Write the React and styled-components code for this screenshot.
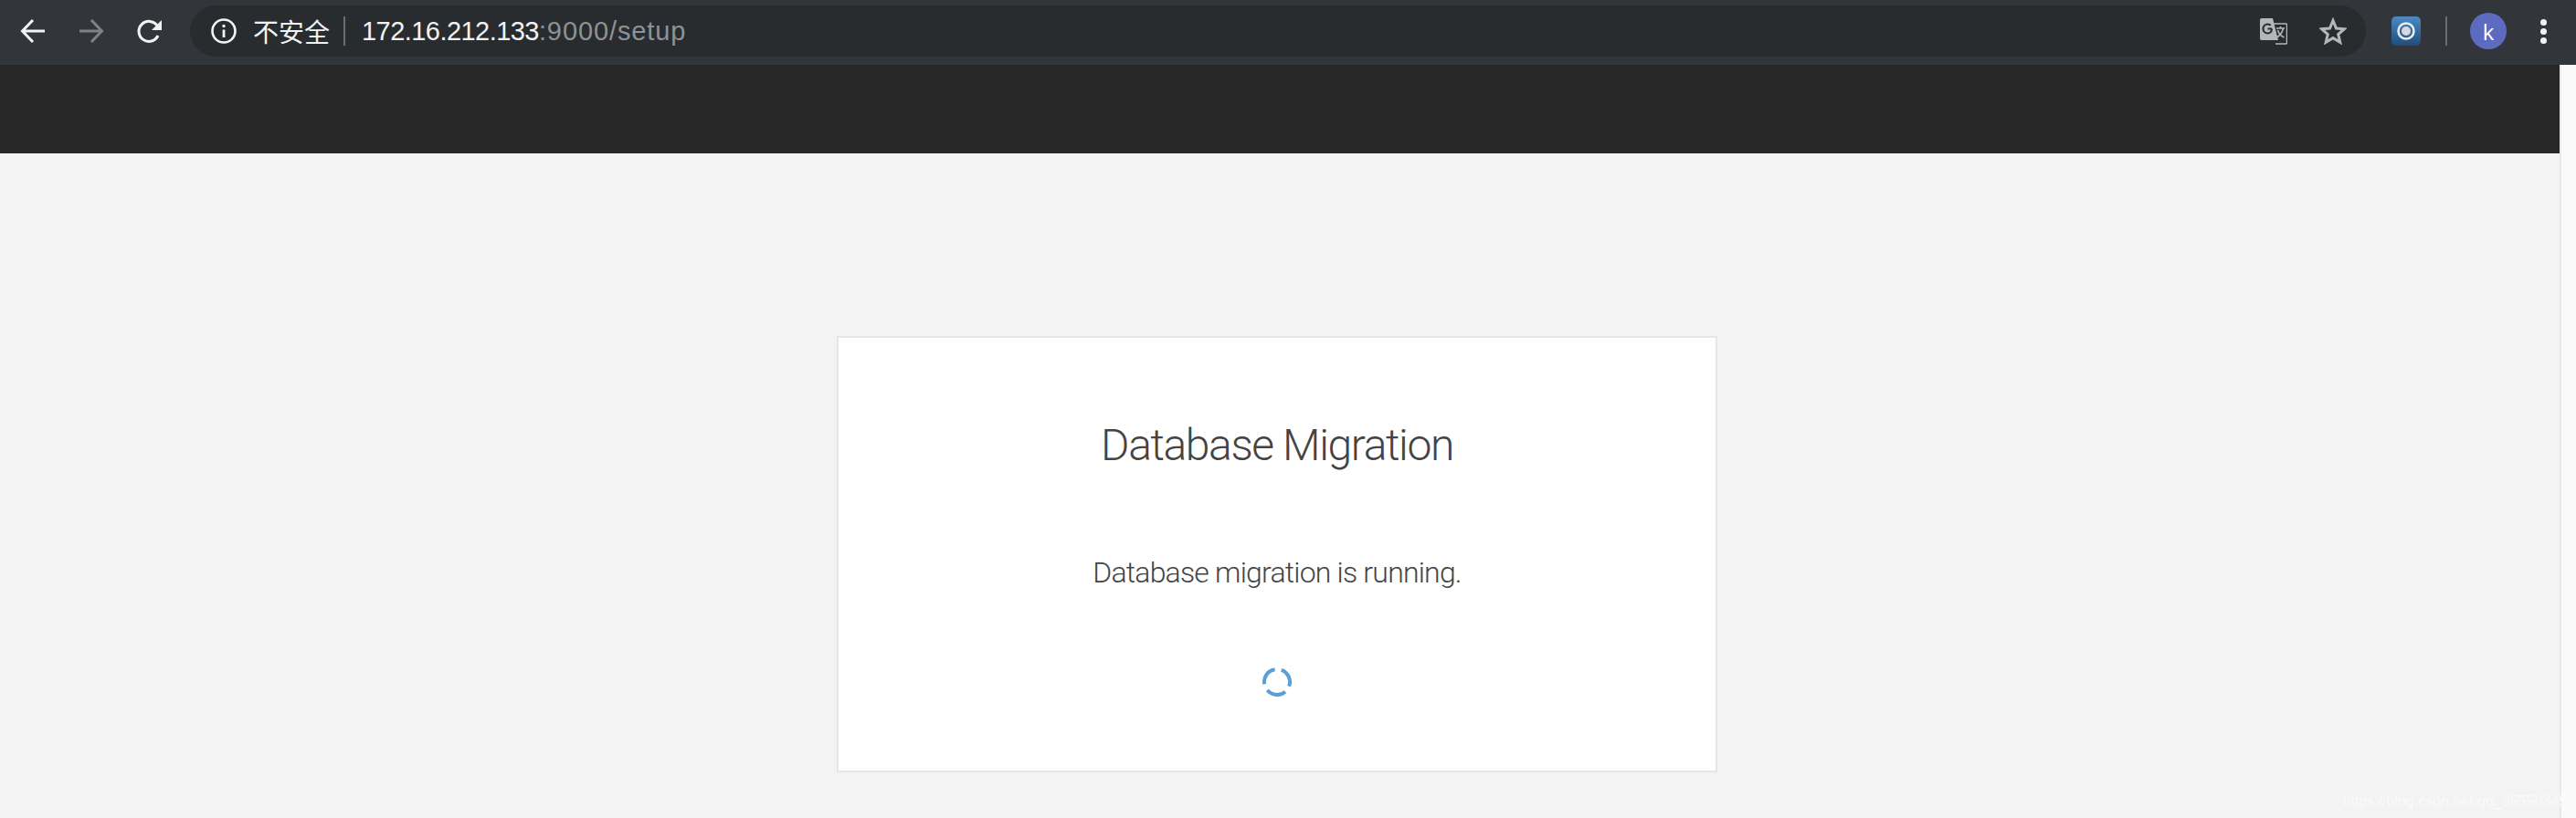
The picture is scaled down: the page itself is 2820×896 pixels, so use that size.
import React from "react";
import styled, { createGlobalStyle } from "styled-components";

const GlobalStyle = createGlobalStyle`
  html, body {
    margin: 0;
    padding: 0;
    background: #f3f3f3;
  }
  body {
    font-family: "Liberation Sans", Arial, sans-serif;
  }
`;

const Screen = styled.div`
  position: relative;
  width: 2820px;
  height: 896px;
  overflow: hidden;
  display: flex;
  flex-direction: column;
`;

const Toolbar = styled.div`
  height: 71px;
  flex: none;
  box-sizing: border-box;
  padding: 0 0 3px 4px;
  display: flex;
  align-items: center;
  background: #32363a;
`;

const NavButton = styled.div`
  width: 64px;
  height: 40px;
  flex: none;
  display: flex;
  align-items: center;
  justify-content: center;
  color: ${(p) => (p.$off ? "#7f8284" : "#f1f3f4")};
`;

const Omnibox = styled.div`
  flex: 1;
  height: 56px;
  margin-left: 12px;
  box-sizing: border-box;
  padding: 0 21px 0 23px;
  display: flex;
  align-items: center;
  border-radius: 28px;
  background: #292c2f;
`;

const InfoIcon = styled.div`
  width: 28px;
  height: 28px;
  flex: none;
  color: #f1f3f4;
  display: flex;
`;

const SecurityLabel = styled.span`
  margin-left: 18px;
  font-family: "Noto Sans CJK SC", sans-serif;
  font-size: 28px;
  line-height: 40px;
  color: #f1f3f4;
`;

const UrlDivider = styled.span`
  width: 2px;
  height: 32px;
  margin: 0 18px 0 15px;
  flex: none;
  background: #6b6e70;
`;

const Url = styled.span`
  font-size: 29px;
  line-height: 40px;
  letter-spacing: -0.55px;
  white-space: nowrap;
  color: #f1f3f4;
`;

const UrlRest = styled.span`
  letter-spacing: 0.9px;
  color: #8f9294;
`;

const OmniActions = styled.div`
  margin-left: auto;
  display: flex;
  align-items: center;
  gap: 35px;
  color: #b4b7b9;
`;

const Extras = styled.div`
  width: 230px;
  flex: none;
  box-sizing: border-box;
  padding-left: 28px;
  display: flex;
  align-items: center;
`;

const ToolbarDivider = styled.span`
  width: 2px;
  height: 32px;
  margin: 0 25px 0 27px;
  flex: none;
  background: #6b6e70;
`;

const Avatar = styled.div`
  width: 40px;
  height: 40px;
  flex: none;
  border-radius: 50%;
  display: flex;
  align-items: center;
  justify-content: center;
  background: #5c6bc0;
  color: #fff;
  font-family: "Open Sans", sans-serif;
  font-size: 24px;
`;

const Dots = styled.div`
  margin-left: 37px;
  display: flex;
  flex-direction: column;
  gap: 3px;
`;

const Dot = styled.span`
  width: 7px;
  height: 7px;
  border-radius: 50%;
  background: #f1f3f4;
`;

const Viewport = styled.div`
  flex: 1;
  min-height: 0;
  display: flex;
`;

const Page = styled.div`
  flex: 1;
  min-width: 0;
  background: #f3f3f3;
`;

const Header = styled.div`
  height: 97px;
  background: #272727;
`;

const Main = styled.main`
  padding: 200px 6px 0 0;
  display: flex;
  justify-content: center;
`;

const Card = styled.section`
  width: 964px;
  height: 478px;
  box-sizing: border-box;
  padding-top: 83px;
  display: flex;
  flex-direction: column;
  align-items: center;
  background: #fff;
  border: 2px solid #e6e6e6;
  color: #444;
  font-family: Roboto, "Liberation Sans", sans-serif;
  font-weight: 300;
`;

const Title = styled.h1`
  margin: 0;
  font-size: 48px;
  line-height: 70px;
  font-weight: 300;
  letter-spacing: -1.4px;
`;

const Message = styled.p`
  margin: 82px 0 0;
  font-size: 32px;
  line-height: 44px;
  letter-spacing: -0.8px;
`;

const Spinner = styled.svg`
  margin-top: 82px;
  width: 32px;
  height: 32px;
  display: block;
`;

const Scrollbar = styled.div`
  width: 18px;
  flex: none;
  box-sizing: border-box;
  border-left: 2px solid #e9e9e9;
  background: #fafafa;
`;

const Watermark = styled.span`
  position: absolute;
  right: 10px;
  bottom: 7px;
  font-size: 16px;
  line-height: 22px;
  color: #fafafa;
  white-space: nowrap;
`;

const BackIcon = ({ flip }) => (
  <svg width="28" height="28" viewBox="0 0 28 28" fill="none" stroke="currentColor" strokeWidth="3" style={flip ? { transform: "scaleX(-1)" } : undefined}>
    <path d="M27 14H3M14 2 2.5 14 14 26" />
  </svg>
);

const ReloadIcon = () => (
  <svg width="28" height="28" viewBox="0 0 28 28" fill="none">
    <path d="M23 19a11 11 0 1 1-1-11" stroke="currentColor" strokeWidth="3" />
    <path d="M27 2v11H16z" fill="currentColor" />
  </svg>
);

const TranslateIcon = () => (
  <svg width="30" height="30" viewBox="0 0 30 30">
    <path d="M14 7h14.5a1 1 0 0 1 1 1v20a1 1 0 0 1-1 1H17" fill="#292c2f" stroke="currentColor" strokeWidth="1.5" />
    <path d="M2 1h12l6 24H2a2 2 0 0 1-2-2V3a2 2 0 0 1 2-2z" fill="currentColor" />
    <path d="M13 12.5H8.5M13 12.5c0 3-2 5-4.5 5a5 5 0 0 1 0-10c1.300 0 2.500.5 3.300 1.300" fill="none" stroke="#292c2f" strokeWidth="2.200" />
    <path d="M18 12h9M22.500 10v2M25.500 12c-1 5-4 8-7 10M19.500 14c1 3.500 3.500 6.500 7 8" fill="none" stroke="currentColor" strokeWidth="1.600" />
  </svg>
);

const StarIcon = () => (
  <svg width="30" height="30" viewBox="0 0 30 30" fill="none" stroke="currentColor" strokeWidth="3" strokeLinejoin="miter">
    <path d="M15 3.500 18.500 12 27.500 12.700 20.700 18.500 22.800 27.300 15 22.600 7.200 27.300 9.300 18.500 2.500 12.700 11.500 12z" />
  </svg>
);

const ExtensionIcon = () => (
  <svg width="32" height="32" viewBox="0 0 32 32">
    <defs>
      <linearGradient id="extFill" x1="0" y1="0" x2="0" y2="1">
        <stop offset="0" stopColor="#4d89c4" />
        <stop offset="1" stopColor="#1f4d7c" />
      </linearGradient>
    </defs>
    <rect width="32" height="32" rx="5" fill="url(#extFill)" />
    <circle cx="16" cy="16" r="8.500" fill="none" stroke="#e9eef2" strokeWidth="2.500" />
    <circle cx="16" cy="16" r="5" fill="#d6d9db" />
  </svg>
);

export default function App() {
  return (
    <Screen>
      <GlobalStyle />
      <Toolbar>
        <NavButton>
          <BackIcon />
        </NavButton>
        <NavButton $off>
          <BackIcon flip />
        </NavButton>
        <NavButton>
          <ReloadIcon />
        </NavButton>
        <Omnibox>
          <InfoIcon>
            <svg width="28" height="28" viewBox="0 0 28 28" fill="none">
              <circle cx="14" cy="14" r="12.500" stroke="currentColor" strokeWidth="2.600" />
              <path d="M14 12.500V21" stroke="currentColor" strokeWidth="2.800" />
              <circle cx="14" cy="8.500" r="1.700" fill="currentColor" />
            </svg>
          </InfoIcon>
          <SecurityLabel>不安全</SecurityLabel>
          <UrlDivider />
          <Url>
            172.16.212.133<UrlRest>:9000/setup</UrlRest>
          </Url>
          <OmniActions>
            <TranslateIcon />
            <StarIcon />
          </OmniActions>
        </Omnibox>
        <Extras>
          <ExtensionIcon />
          <ToolbarDivider />
          <Avatar>k</Avatar>
          <Dots>
            <Dot />
            <Dot />
            <Dot />
          </Dots>
        </Extras>
      </Toolbar>
      <Viewport>
        <Page>
          <Header />
          <Main>
            <Card>
              <Title>Database Migration</Title>
              <Message>Database migration is running.</Message>
              <Spinner viewBox="0 0 32 32" fill="none">
                <circle
                  cx="16"
                  cy="16"
                  r="14"
                  stroke="#5b9fd6"
                  strokeWidth="4"
                  pathLength="360"
                  strokeDasharray="90 30"
                  transform="rotate(-70 16 16)"
                />
              </Spinner>
            </Card>
          </Main>
        </Page>
        <Scrollbar />
      </Viewport>
      <Watermark>https://blog.csdn.net/qq_35550345</Watermark>
    </Screen>
  );
}
